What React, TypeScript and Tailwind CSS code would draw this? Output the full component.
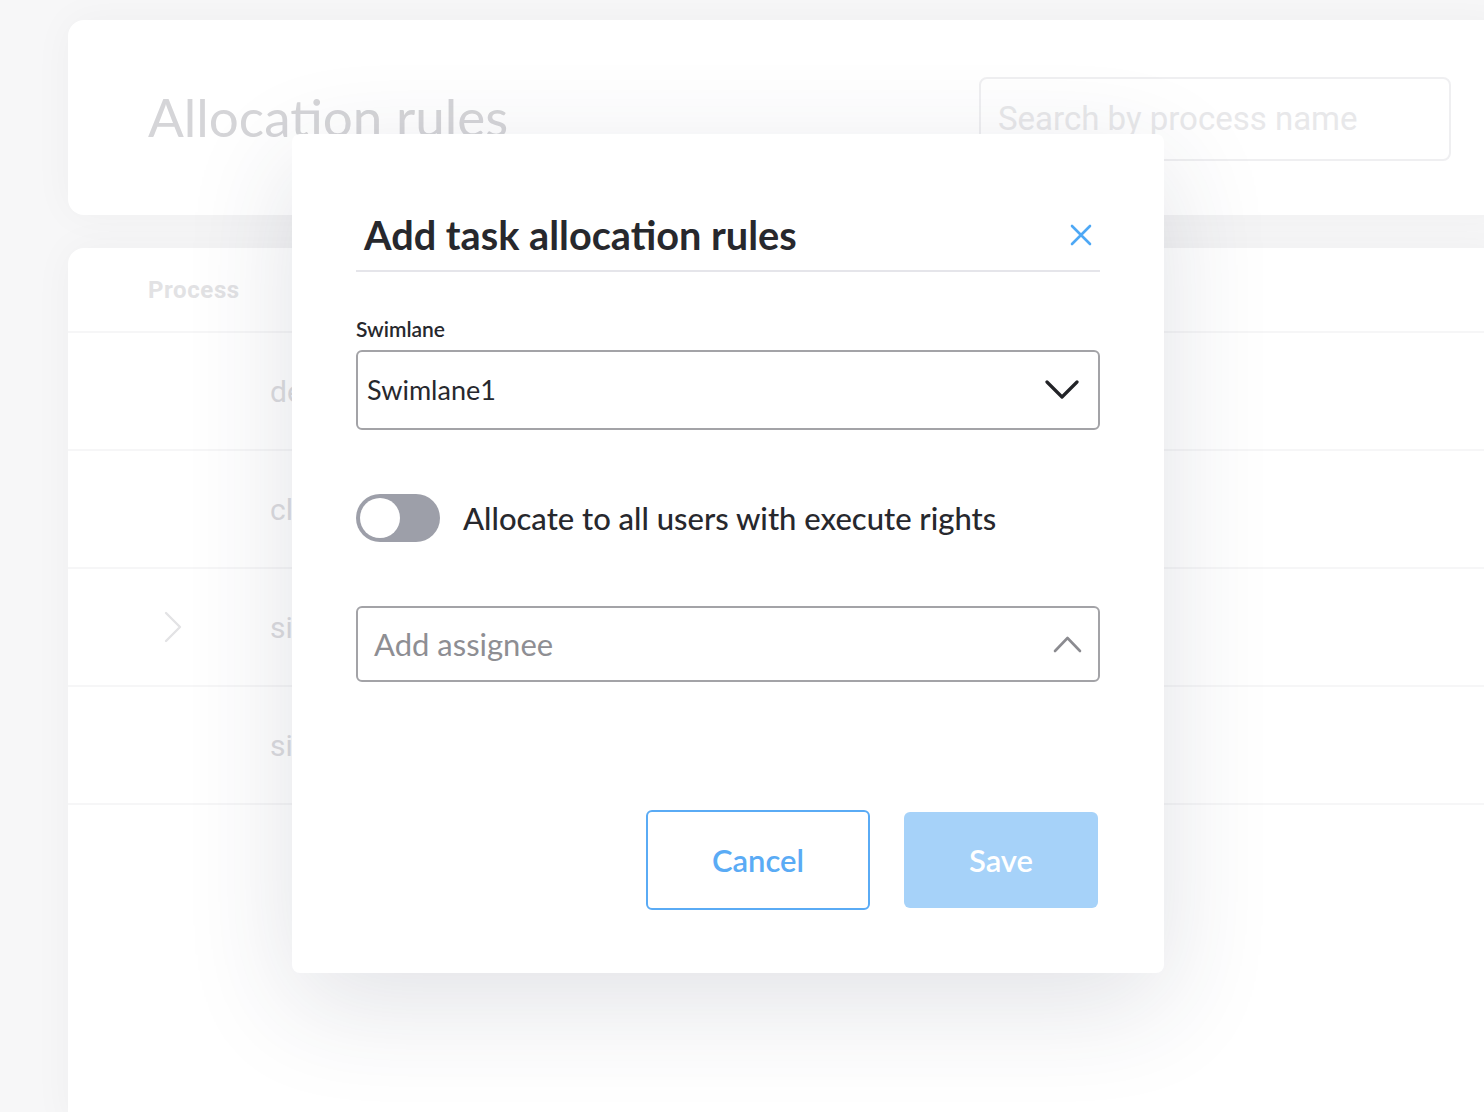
const rows = [
  { name: "demo process", arrow: false },
  { name: "claims", arrow: false },
  { name: "simple flow", arrow: true },
  { name: "sign off", arrow: false },
];

function ChevronDown() {
  return (
    <svg width="34" height="22" viewBox="0 0 34 22" fill="none">
      <path d="M2 3 L17 18 L32 3" stroke="#222327" strokeWidth="3.2" strokeLinecap="round" strokeLinejoin="round" />
    </svg>
  );
}

function ChevronUp() {
  return (
    <svg width="29" height="18" viewBox="0 0 29 18" fill="none">
      <path d="M2 16 L14.5 3 L27 16" stroke="#8b8b90" strokeWidth="2.6" strokeLinecap="round" strokeLinejoin="round" />
    </svg>
  );
}

function CloseIcon() {
  return (
    <svg width="22" height="22" viewBox="0 0 22 22" fill="none">
      <path d="M2 2 L20 20 M20 2 L2 20" stroke="#4ea8f5" strokeWidth="2.6" strokeLinecap="round" />
    </svg>
  );
}

export default function App() {
  return (
    <div className="relative h-[1112px] w-full overflow-hidden bg-[#f7f7f8] font-['Lato',sans-serif]">
      {/* background page, shown faded behind the dialog */}
      <div className="flex flex-col pl-[68px] pt-[20px]">
        <div className="flex h-[195px] w-[1440px] items-center justify-between rounded-2xl bg-white pl-[80px] pr-[57px] shadow-[0_0_40px_rgba(0,0,0,0.04)]">
          <h1 className="mt-[-2px] text-[53px] leading-none text-[#d5d5d8]">Allocation rules</h1>
          <div className="mt-[2px] flex h-[84px] w-[472px] items-center rounded-lg border-2 border-[#efeff1] px-[17px] font-['Roboto',sans-serif] text-[33px] text-[#e8e8ea]">
            Search by process name
          </div>
        </div>

        <div className="mt-[33px] h-[880px] w-[1440px] rounded-2xl bg-white shadow-[0_0_40px_rgba(0,0,0,0.04)]">
          <div className="flex h-[85px] items-center border-b-2 border-[#f6f6f7] pl-[80px] font-['Roboto',sans-serif] text-[24px] font-bold tracking-[0.6px] text-[#e2e2e4]">
            Process
          </div>
          {rows.map((r) => (
            <div key={r.name} className="flex h-[118px] items-center border-b-2 border-[#f6f6f7]">
              <div className="flex w-[202px] pl-[96px]">
                {r.arrow && (
                  <svg width="18" height="32" viewBox="0 0 18 32" fill="none">
                    <path d="M2 2 L16 16 L2 30" stroke="#e3e3e5" strokeWidth="2.4" strokeLinecap="round" strokeLinejoin="round" />
                  </svg>
                )}
              </div>
              {/* the dialog covers everything past x=292 */}
              <div className="w-[22px] overflow-hidden whitespace-nowrap font-['Roboto',sans-serif] text-[30px] text-[#dcdcdf]">
                {r.name}
              </div>
            </div>
          ))}
        </div>
      </div>

      {/* dialog */}
      <div className="absolute left-[292px] top-[134px] flex h-[839px] w-[872px] flex-col rounded-lg bg-white px-[64px] pt-[78px] shadow-[0_30px_110px_rgba(40,50,80,0.14)]">
        <div className="flex items-center justify-between border-b-2 border-[#e5e5ea] pb-[12px] pl-[8px] pr-[8px]">
          <h2 className="text-[39.7px] font-bold leading-[46px] text-[#27282d]">Add task allocation rules</h2>
          <CloseIcon />
        </div>

        <label className="mt-[45px] text-[21px] font-semibold leading-[24px] text-[#27282d]">Swimlane</label>
        <div className="mt-[9px] flex h-[80px] items-center justify-between rounded-md border-2 border-[#a3a3a7] pl-[9px] pr-[19px]">
          <span className="text-[27px] text-[#27282d]">Swimlane1</span>
          <ChevronDown />
        </div>

        <div className="mt-[64px] flex items-center gap-[23px]">
          <div className="flex h-[48px] w-[84px] items-center rounded-full bg-[#9d9fa9] px-[4px]">
            <div className="h-[40px] w-[40px] rounded-full bg-white" />
          </div>
          <span className="text-[31px] font-medium text-[#27282d]">Allocate to all users with execute rights</span>
        </div>

        <div className="mt-[64px] flex h-[76px] items-center justify-between rounded-md border-2 border-[#a3a3a7] pl-[16px] pr-[16px]">
          <span className="text-[31px] text-[#8e8e93]">Add assignee</span>
          <ChevronUp />
        </div>

        <div className="mt-[128px] flex justify-end gap-[34px] pr-[2px]">
          <button className="h-[100px] w-[224px] rounded-md border-2 border-[#5aabf5] bg-white text-[31px] font-semibold text-[#5aabf5]">
            Cancel
          </button>
          <button className="mt-[2px] h-[96px] w-[194px] rounded-md bg-[#a6d2f9] text-[31px] font-semibold text-white">
            Save
          </button>
        </div>
      </div>
    </div>
  );
}
